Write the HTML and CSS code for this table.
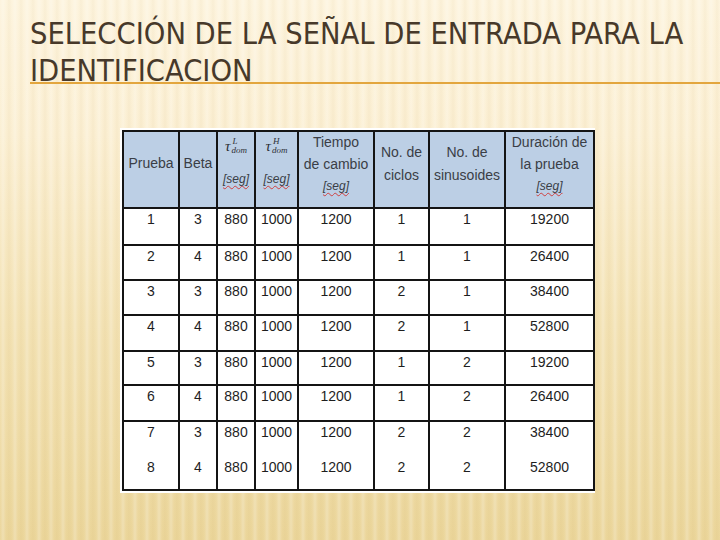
FILE: index.html
```html
<!DOCTYPE html>
<html>
<head>
<meta charset="utf-8">
<link rel="stylesheet" href="styles.css">
</head>
<body>
<div class="slide">
  <h1 class="title">SELECCIÓN DE LA SEÑAL DE ENTRADA PARA LA IDENTIFICACION</h1>
  <div class="figure">
    <table class="tbl">
      <colgroup>
        <col class="c1"><col class="c2"><col class="c3"><col class="c4"><col class="c5"><col class="c6"><col class="c7"><col class="c8">
      </colgroup>
      <thead>
        <tr class="hrow">
          <th>Prueba</th>
          <th>Beta</th>
          <th class="tcol"><div class="tau"><span class="t">τ</span><span class="ss"><span class="sp">L</span><span class="sb">dom</span></span></div><div class="seg lower">[seg]</div></th>
          <th class="tcol"><div class="tau"><span class="t">τ</span><span class="ss"><span class="sp">H</span><span class="sb">dom</span></span></div><div class="seg lower">[seg]</div></th>
          <th class="top3">Tiempo<br>de cambio<br><span class="seg">[seg]</span></th>
          <th>No. de<br>ciclos</th>
          <th>No. de<br>sinusoides</th>
          <th class="top3">Duración de<br>la prueba<br><span class="seg">[seg]</span></th>
        </tr>
      </thead>
      <tbody>
        <tr class="r r1"><td>1</td><td>3</td><td>880</td><td>1000</td><td>1200</td><td>1</td><td>1</td><td>19200</td></tr>
        <tr class="r r2"><td>2</td><td>4</td><td>880</td><td>1000</td><td>1200</td><td>1</td><td>1</td><td>26400</td></tr>
        <tr class="r r3"><td>3</td><td>3</td><td>880</td><td>1000</td><td>1200</td><td>2</td><td>1</td><td>38400</td></tr>
        <tr class="r r4"><td>4</td><td>4</td><td>880</td><td>1000</td><td>1200</td><td>2</td><td>1</td><td>52800</td></tr>
        <tr class="r r5"><td>5</td><td>3</td><td>880</td><td>1000</td><td>1200</td><td>1</td><td>2</td><td>19200</td></tr>
        <tr class="r r6"><td>6</td><td>4</td><td>880</td><td>1000</td><td>1200</td><td>1</td><td>2</td><td>26400</td></tr>
        <tr class="r r7"><td>7</td><td>3</td><td>880</td><td>1000</td><td>1200</td><td>2</td><td>2</td><td>38400</td></tr>
        <tr class="r r8"><td>8</td><td>4</td><td>880</td><td>1000</td><td>1200</td><td>2</td><td>2</td><td>52800</td></tr>
      </tbody>
    </table>
  </div>
</div>
</body>
</html>
```
FILE: styles.css
```css
html, body {
  margin: 0;
  padding: 0;
}
body {
  width: 720px;
  height: 540px;
  overflow: hidden;
}
.slide {
  width: 720px;
  height: 540px;
  box-sizing: border-box;
  padding-top: 15px;
  background:
    repeating-linear-gradient(90deg, rgba(255,255,255,0) 0px, rgba(255,255,255,0.22) 3px, rgba(255,255,255,0) 6px, rgba(190,150,70,0.06) 9px, rgba(255,255,255,0) 12px),
    linear-gradient(180deg, #fdf4de 0%, #fbefd3 25%, #f3e2b4 60%, #ebd69b 100%);
}
.title {
  margin: 0 0 0 30px;
  font-family: "Liberation Sans Narrow", "DejaVu Sans Condensed", sans-serif;
  font-weight: normal;
  font-size: 30.5px;
  line-height: 37px;
  color: #47392a;
  border-bottom: 2px solid #e3a63e;
  padding-bottom: 0;
  height: 67px;
}
.figure {
  margin: 44px 0 0 120px;
  width: 475px;
  background: #fff;
  padding: 2px;
  box-sizing: border-box;
}
.tbl {
  border-collapse: collapse;
  table-layout: fixed;
  width: 471px;
  font-family: "Liberation Sans", Arial, sans-serif;
  font-size: 14px;
  color: #1e1e1e;
}
.c1 { width: 56px; }
.c2 { width: 38px; }
.c3 { width: 38px; }
.c4 { width: 43px; }
.c5 { width: 76px; }
.c6 { width: 55px; }
.c7 { width: 76px; }
.c8 { width: 89px; }
.tbl th, .tbl td {
  border: 2px solid #141414;
  text-align: center;
  padding: 0;
}
.tbl th {
  background: #bccfe5;
  font-weight: normal;
  color: #3a3e46;
  vertical-align: middle;
  line-height: 23px;
  padding-bottom: 12px;
  height: 63px;
}
.tbl th.top3 {
  vertical-align: top;
  line-height: 21.5px;
  padding-bottom: 0;
}
.tbl th.tcol {
  vertical-align: top;
  padding-top: 3px;
  padding-bottom: 0;
  height: 72px;
}
.tbl td {
  vertical-align: top;
  padding-top: 2px;
  line-height: 16px;
}
.r1 td { height: 33px; }
.r2 td, .r3 td { height: 31px; }
.r4 td { height: 32px; }
.r5 td { height: 30px; }
.r6 td { height: 32px; }
.r7 td { height: 33px; border-bottom: none; }
.r8 td { height: 30px; border-top: none; }
.tau {
  font-family: "Liberation Serif", serif;
  font-style: italic;
  font-size: 15px;
  line-height: 20px;
  height: 22px;
  display: flex;
  justify-content: center;
  align-items: center;
  color: #2c2f36;
}
.ss {
  display: inline-flex;
  flex-direction: column;
  font-size: 9px;
  line-height: 9px;
  text-align: left;
  margin-left: 1px;
}
.sp { padding-left: 1px; }
.seg {
  font-style: italic;
  font-size: 12px;
  text-decoration: underline wavy #d04040;
  text-decoration-thickness: 1px;
  text-underline-offset: 2px;
}
.seg.lower {
  margin-top: 14px;
  line-height: 16px;
}
```
